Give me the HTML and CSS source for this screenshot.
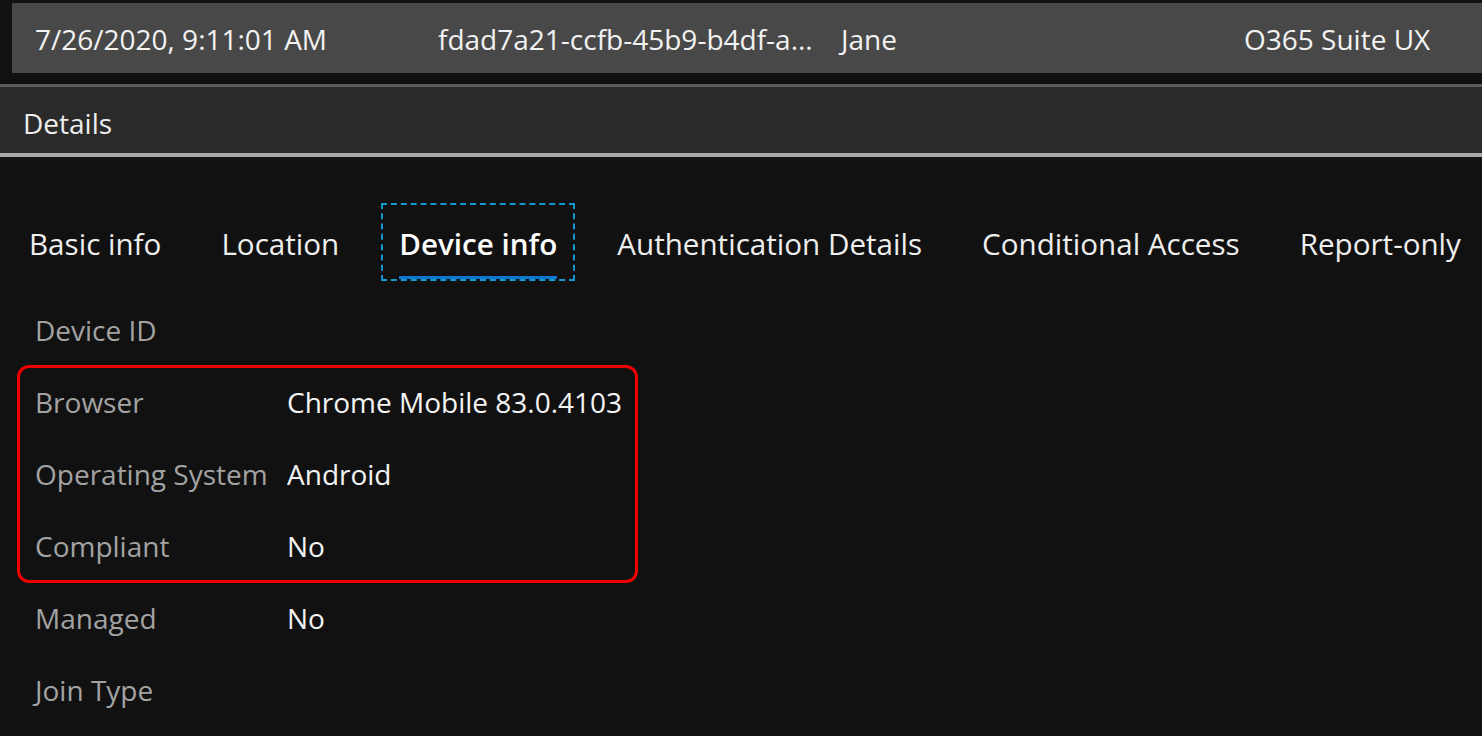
FILE: index.html
```html
<!DOCTYPE html>
<html lang="en">
<head>
<meta charset="utf-8">
<title>Sign-in details</title>
<link rel="stylesheet" href="styles.css">
</head>
<body>
  <div class="topbar">
    <div class="cell">7/26/2020, 9:11:01 AM</div>
    <div class="cell">fdad7a21-ccfb-45b9-b4df-a...</div>
    <div class="cell">Jane</div>
    <div class="cell last">O365 Suite UX</div>
  </div>
  <div class="header">Details</div>
  <div class="tabs">
    <div class="tab"><span>Basic info</span></div>
    <div class="tab"><span>Location</span></div>
    <div class="tab active"><span>Device info</span></div>
    <div class="tab"><span>Authentication Details</span></div>
    <div class="tab"><span>Conditional Access</span></div>
    <div class="tab"><span>Report-only</span></div>
  </div>
  <div class="rows">
    <div class="row"><div class="label">Device ID</div><div class="value"></div></div>
    <div class="group">
      <div class="row"><div class="label">Browser</div><div class="value">Chrome Mobile 83.0.4103</div></div>
      <div class="row"><div class="label">Operating System</div><div class="value">Android</div></div>
      <div class="row"><div class="label">Compliant</div><div class="value">No</div></div>
    </div>
    <div class="row"><div class="label">Managed</div><div class="value">No</div></div>
    <div class="row"><div class="label">Join Type</div><div class="value"></div></div>
  </div>
</body>
</html>
```
FILE: styles.css
```css
html, body {
  margin: 0;
  padding: 0;
  background: #111111;
  height: 100%;
  overflow: hidden;
}
body {
  font-family: "Open Sans", "Liberation Sans", sans-serif;
  color: #f0f0f0;
  padding-top: 3px;
  box-sizing: border-box;
}
.topbar {
  margin-left: 12px;
  height: 70px;
  background: #484848;
  padding-left: 23px;
  display: flex;
  align-items: center;
  font-size: 28px;
  color: #f2f2f2;
  white-space: nowrap;
  overflow: hidden;
}
.cell {
  width: 403px;
  flex: none;
  padding-top: 1px;
}
.cell.last {
  width: auto;
  flex: 1 1 auto;
}
.header {
  margin-top: 11px;
  border-top: 3px solid #5c5c5c;
  border-bottom: 4px solid #a8a8a8;
  background: #2a2a2a;
  padding-left: 23px;
  padding-top: 6px;
  height: 60px;
  display: flex;
  align-items: center;
  font-size: 28px;
  color: #ededed;
}
.tabs {
  margin-top: 46px;
  padding-left: 11px;
  display: flex;
  gap: 24px;
  font-size: 29.6px;
  white-space: nowrap;
}
.tab {
  height: 78px;
  box-sizing: border-box;
  padding: 0 16px;
  border: 2px dashed transparent;
  display: flex;
  color: #eeeeee;
}
.tab span {
  display: flex;
  align-items: center;
  padding-top: 5px;
  border-bottom: 3px solid transparent;
}
.tab.active {
  border-color: #1597cf;
  font-weight: 600;
  color: #ffffff;
}
.tab.active span {
  border-bottom-color: #0a78d0;
}
.rows {
  margin-top: 13px;
  padding-left: 18px;
  font-size: 28px;
}
.row {
  height: 72px;
  display: flex;
  align-items: center;
  padding-left: 17px;
}
.label {
  width: 252px;
  flex: none;
  color: #a3a3a3;
}
.value {
  color: #f4f4f4;
}
.group {
  width: 619px;
  border-radius: 11px;
  outline: 3px solid #f00000;
  outline-offset: -2px;
}
```
